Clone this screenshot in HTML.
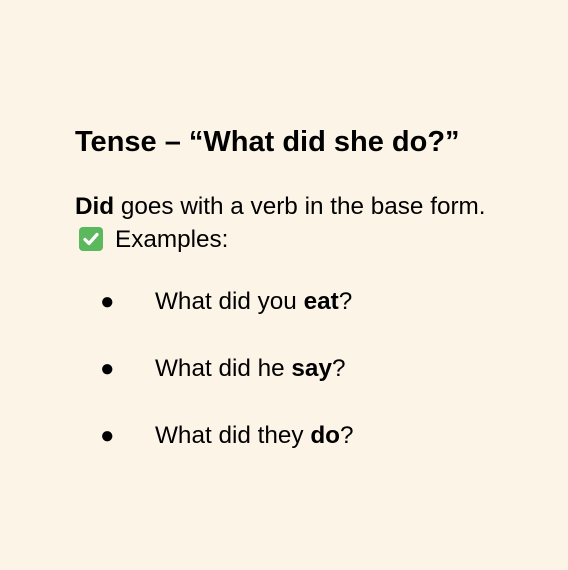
<!DOCTYPE html>
<html><head><style>
html,body{margin:0;padding:0;}
body{width:568px;height:570px;background:#fcf4e7;font-family:"Liberation Sans",Arial,sans-serif;color:#000;position:relative;overflow:hidden;}
.t{position:absolute;left:75px;top:125px;font-size:29px;line-height:34px;font-weight:bold;white-space:nowrap;}
.p{position:absolute;left:75px;font-size:24.3px;line-height:28px;white-space:nowrap;}
.b{position:absolute;left:100px;font-size:24px;line-height:28px;}
.li{position:absolute;left:155px;font-size:24.3px;line-height:28px;white-space:nowrap;}
.chk{display:inline-block;width:24px;height:24px;background:#5cb85c;border-radius:4px;vertical-align:-4px;margin:0 12px 0 4px;position:relative;}
</style></head><body>
<div class="t">Tense – “What did she do?”</div>
<div class="p" style="top:193px"><b>Did</b> goes with a verb in the base form.</div>
<div class="p" style="top:226px"><span class="chk"><svg width="24" height="24" viewBox="0 0 24 24"><path d="M6 12.5l4 4 8-9" stroke="#fff" stroke-width="3.2" fill="none" stroke-linecap="round" stroke-linejoin="round"/></svg></span>Examples:</div>
<div class="b" style="top:288px">●</div><div class="li" style="top:288px">What did you <b>eat</b>?</div>
<div class="b" style="top:355px">●</div><div class="li" style="top:355px">What did he <b>say</b>?</div>
<div class="b" style="top:422px">●</div><div class="li" style="top:422px">What did they <b>do</b>?</div>
</body></html>
